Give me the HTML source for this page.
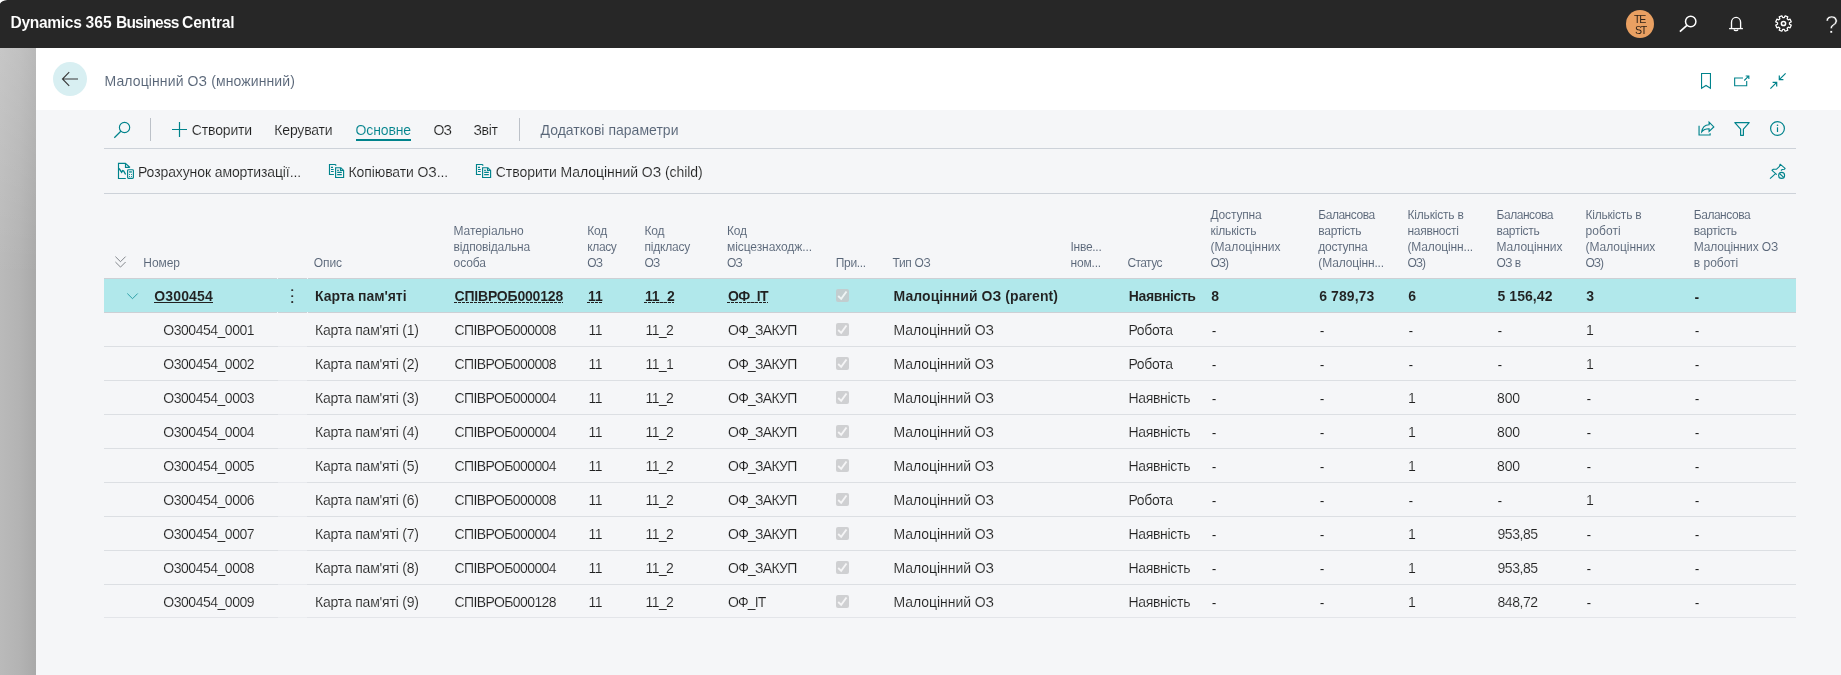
<!DOCTYPE html>
<html lang="uk"><head><meta charset="utf-8"><title>Малоцінний ОЗ (множинний)</title>
<style>
html,body{margin:0;padding:0;}
body{width:1841px;height:675px;position:relative;overflow:hidden;background:#f5f6f8;font-family:"Liberation Sans",sans-serif;color:#212121;}
.t{position:absolute;white-space:nowrap;line-height:20px;font-size:14px;}
.abs{position:absolute;}
#topbar{position:absolute;left:0;top:0;width:1841px;height:48px;background:#272727;}
#strip{position:absolute;left:0;top:48px;width:36px;height:627px;background:linear-gradient(176deg,rgba(255,255,255,.19) 0px,rgba(255,255,255,0) 230px),linear-gradient(90deg,#bababa 0%,#b3b3b3 55%,#a9a9a9 100%);}
#hdr{position:absolute;left:36px;top:48px;width:1805px;height:62px;background:#ffffff;}
#back{position:absolute;left:53px;top:62px;width:34px;height:34px;border-radius:50%;background:#d8eff2;}
.hl{position:absolute;left:104px;width:1692px;height:1px;background:#cdd2d9;}
.vs{position:absolute;width:1px;height:23px;top:118px;background:#bcc1c8;}
.sel{position:absolute;left:104px;width:1692px;height:33px;background:#b1e8eb;border-top:1px solid #cdd0d5;border-bottom:1px solid #cdd0d5;}
.rb{position:absolute;left:104px;width:1692px;height:1px;background:#dcdfe3;}
.cb{position:absolute;}
svg{position:absolute;overflow:visible;}
#ul{position:absolute;left:355.5px;top:139px;width:55.5px;height:2px;background:#00838c;}
#av{position:absolute;left:1625.8px;top:9.8px;width:28.4px;height:28.4px;border-radius:50%;background:#e9a062;}
#txt{position:absolute;left:0;top:0;width:1841px;height:675px;will-change:transform;}

</style></head>
<body>
<div id="topbar"></div>
<svg style="left:0;top:0" width="8" height="5" viewBox="0 0 8 5"><path d="M0 0 H7.2 Q1.6 0.4 0 3.8 Z" fill="#ffffff"/></svg>
<div id="strip"></div>
<div id="hdr"></div>
<div id="back"></div>
<!-- back arrow -->
<svg style="left:61px;top:71px" width="18" height="16" viewBox="0 0 18 16"><path d="M8.2 1.2 L1.5 8 L8.2 14.8 M1.5 8 H17" fill="none" stroke="#3b3b3b" stroke-width="1.15"/></svg>
<!-- avatar -->
<div id="av"></div>
<span class="t" style="left:1634.2px;top:13.2px;font-size:10.6px;line-height:12px;color:#2e2117;letter-spacing:-1.25px;will-change:transform;">TE</span>
<span class="t" style="left:1634.5px;top:24.1px;font-size:10.6px;line-height:12px;color:#2e2117;letter-spacing:-1.25px;will-change:transform;">ST</span>
<!-- top search -->
<svg style="left:1679px;top:16px" width="18" height="17" viewBox="0 0 18 17"><circle cx="11.7" cy="5.5" r="5.2" fill="none" stroke="#fff" stroke-width="1.5"/><path d="M7.9 9.3 L0.9 15.7" stroke="#fff" stroke-width="1.7" fill="none"/></svg>
<!-- bell -->
<svg style="left:1729px;top:16px" width="14" height="16" viewBox="0 0 14 16"><path d="M2.5 12.5 V6.3 A4.55 4.9 0 0 1 11.6 6.3 V12.5" fill="none" stroke="#fff" stroke-width="1.35"/><path d="M0.1 12.6 H13.9" stroke="#fff" stroke-width="1.3"/><path d="M4.9 13.5 A2.2 1.7 0 0 0 9.1 13.5" fill="none" stroke="#fff" stroke-width="1.2"/></svg>
<!-- gear -->
<svg style="left:1775.4px;top:15.4px" width="17" height="17" viewBox="-8.5 -8.5 17 17"><g fill="none" stroke="#fff" stroke-width="1.25" stroke-linejoin="round"><circle r="2.1" stroke-width="1.5"/><path d="M0.80 -5.95 L1.66 -7.72 L4.29 -6.64 L3.64 -4.77 L4.77 -3.64 L6.64 -4.29 L7.72 -1.66 L5.95 -0.80 L5.95 0.80 L7.72 1.66 L6.64 4.29 L4.77 3.64 L3.64 4.77 L4.29 6.64 L1.66 7.72 L0.80 5.95 L-0.80 5.95 L-1.66 7.72 L-4.29 6.64 L-3.64 4.77 L-4.77 3.64 L-6.64 4.29 L-7.72 1.66 L-5.95 0.80 L-5.95 -0.80 L-7.72 -1.66 L-6.64 -4.29 L-4.77 -3.64 L-3.64 -4.77 L-4.29 -6.64 L-1.66 -7.72 L-0.80 -5.95 Z"/></g></svg>
<!-- help -->
<span class="t" style="left:1825.2px;top:10.7px;font-size:23.5px;line-height:28px;color:#fff;-webkit-text-stroke:0.55px #272727;will-change:transform;">?</span>
<!-- header icons -->
<svg style="left:1701px;top:73px" width="11" height="16" viewBox="0 0 11 16"><path d="M0.55 0.55 H9.45 V15.3 L5 12.5 L0.55 15.3 Z" fill="none" stroke="#00838c" stroke-width="1.1"/></svg>
<svg style="left:1733.5px;top:74.5px" width="16" height="12" viewBox="0 0 16 12"><path d="M9 3.05 H0.65 V10.8 H12.7 V6 M10.3 5.5 L14.6 1.2 M11.7 0.95 H14.85 V4.1" fill="none" stroke="#00838c" stroke-width="1.1"/></svg>
<svg style="left:1770px;top:73px" width="16" height="16" viewBox="0 0 16 16"><path d="M15.6 0.4 L9.3 6.7 M9.3 2.6 V6.7 H13.4 M0.4 15.6 L6.7 9.3 M2.6 9.3 H6.7 V13.4" fill="none" stroke="#00838c" stroke-width="1.2"/></svg>
<!-- action bar 1 -->
<svg style="left:114px;top:122px" width="16" height="16" viewBox="0 0 16 16"><circle cx="10.55" cy="5.5" r="5.15" fill="none" stroke="#00838c" stroke-width="1.15"/><path d="M6.8 9.3 L0.3 15.7" stroke="#00838c" stroke-width="1.25"/></svg>
<div class="vs" style="left:150px"></div>
<svg style="left:171.8px;top:121.8px" width="15" height="15" viewBox="0 0 15 15"><path d="M7.5 0 V15 M0 7.5 H15" stroke="#00838c" stroke-width="1.2"/></svg>
<div id="ul"></div>
<div class="vs" style="left:519px"></div>
<div class="hl" style="top:148px"></div>
<div class="hl" style="top:193px"></div>
<!-- right icons -->
<svg style="left:1697.5px;top:120.5px" width="17" height="15" viewBox="0 0 17 15"><path d="M1.05 4.7 V14 H12.1 V12.2 M3.7 10.9 C4.2 7 7 3.9 11.1 3.7 V1.2 L15.8 5.9 L11.1 10.3 V7.8 C7.8 7.7 5.4 8.8 3.7 10.9 Z" fill="none" stroke="#00838c" stroke-width="1.15" stroke-linejoin="miter"/></svg>
<svg style="left:1734px;top:122px" width="16" height="14" viewBox="0 0 16 14"><path d="M0.8 0.7 H15.2 L9.4 7.2 V13.3 H6.6 V7.2 Z" fill="none" stroke="#00838c" stroke-width="1.2" stroke-linejoin="round"/></svg>
<svg style="left:1770px;top:121px" width="15" height="15" viewBox="0 0 15 15"><circle cx="7.5" cy="7.5" r="6.9" fill="none" stroke="#00838c" stroke-width="1.2"/><path d="M7.5 6.3 V11" stroke="#00838c" stroke-width="1.2"/><circle cx="7.5" cy="4.2" r="0.8" fill="#00838c"/></svg>
<!-- pin -->
<svg style="left:1760px;top:158px" width="40" height="28" viewBox="0 0 40 28"><g fill="none" stroke="#00838c" stroke-width="1.1" stroke-linejoin="round" stroke-linecap="butt"><path d="M16.8 16.6 L12 12.3 L13.4 11.2 H16.6 L19.5 8.4 L20.1 6.2 L25.1 10.4 L24.4 11.3 L22.3 11.5 L20.9 12.5"/><path d="M10 20.6 L15.6 15.6"/><circle cx="21.6" cy="17.4" r="3"/><path d="M19.5 15.5 L23.7 19.3"/></g></svg>
<!-- action bar 2 icons -->
<svg style="left:110px;top:158px" width="30" height="26" viewBox="0 0 30 26"><g fill="none" stroke="#00838c" stroke-width="1.15"><path d="M15.8 20.5 H8.5 V5.4 H15.4 L20 9.5 M15.5 5.6 V9.3 H19.8"/><path d="M9 10.4 L11.6 14.2 L12.7 12.6 L13.7 13 L15.6 16.5" stroke-width="1.35"/><rect x="17.6" y="11.7" width="5.8" height="8.6" rx="0.9"/></g><rect x="19.1" y="13.3" width="2.8" height="1.3" fill="#00838c"/><g fill="#00838c"><circle cx="19.5" cy="16.5" r="0.55"/><circle cx="21.5" cy="16.5" r="0.55"/><circle cx="19.5" cy="18.5" r="0.55"/><circle cx="21.5" cy="18.5" r="0.55"/></g></svg>
<svg style="left:322px;top:158px" width="30" height="26" viewBox="0 0 30 26"><g fill="none" stroke="#00838c" stroke-width="1.15"><path d="M11.9 16.5 H7.5 V6.5 H13.2 L14.3 7.5"/><path d="M9 9.4 H11 M9 11.5 H11.7 M9 13.5 H11.7"/><path d="M13.6 9.7 H18.9 L21.6 12.4 V19.5 H13.6 Z"/><path d="M18.5 9.9 V12.4 H21.4"/><path d="M15.2 12.4 H16.8 M15.2 14.4 H19.8 M15.2 16.6 H19.8"/></g></svg>
<svg style="left:469.3px;top:158px" width="30" height="26" viewBox="0 0 30 26"><g fill="none" stroke="#00838c" stroke-width="1.15"><path d="M11.9 16.5 H7.5 V6.5 H13.2 L14.3 7.5"/><path d="M9 9.4 H11 M9 11.5 H11.7 M9 13.5 H11.7"/><path d="M13.6 9.7 H18.9 L21.6 12.4 V19.5 H13.6 Z"/><path d="M18.5 9.9 V12.4 H21.4"/><path d="M15.2 12.4 H16.8 M15.2 14.4 H19.8 M15.2 16.6 H19.8"/></g></svg>
<!-- table header chevron -->
<svg style="left:115px;top:256px" width="11" height="12" viewBox="0 0 11 12"><path d="M0.4 0.6 L5.5 5.7 L10.6 0.6 M0.4 6 L5.5 11.1 L10.6 6" fill="none" stroke="#6e7379" stroke-width="0.85"/></svg>
<!-- row chevron -->
<svg style="left:127px;top:292.5px;z-index:3" width="11" height="7" viewBox="0 0 11 7"><path d="M0.3 0.5 L5.5 5.7 L10.7 0.5" fill="none" stroke="#1f979f" stroke-width="0.9"/></svg>
<!-- kebab -->
<svg style="left:291.3px;top:288.9px;z-index:3" width="3" height="15" viewBox="0 0 3 15"><rect x="0.25" y="0.15" width="1.95" height="1.95" rx="0.6" fill="#303030"/><rect x="0.25" y="6.15" width="1.95" height="1.95" rx="0.6" fill="#303030"/><rect x="0.25" y="12.05" width="1.95" height="1.95" rx="0.6" fill="#303030"/></svg>

<div class="sel" style="top:278px"></div>
<div class="rb" style="top:346px"></div>
<div class="abs" style="left:278px;top:346px;width:29px;height:1px;background:rgba(245,246,248,.45)"></div>
<div class="rb" style="top:380px"></div>
<div class="abs" style="left:278px;top:380px;width:29px;height:1px;background:rgba(245,246,248,.45)"></div>
<div class="rb" style="top:414px"></div>
<div class="abs" style="left:278px;top:414px;width:29px;height:1px;background:rgba(245,246,248,.45)"></div>
<div class="rb" style="top:448px"></div>
<div class="abs" style="left:278px;top:448px;width:29px;height:1px;background:rgba(245,246,248,.45)"></div>
<div class="rb" style="top:482px"></div>
<div class="abs" style="left:278px;top:482px;width:29px;height:1px;background:rgba(245,246,248,.45)"></div>
<div class="rb" style="top:516px"></div>
<div class="abs" style="left:278px;top:516px;width:29px;height:1px;background:rgba(245,246,248,.45)"></div>
<div class="rb" style="top:550px"></div>
<div class="abs" style="left:278px;top:550px;width:29px;height:1px;background:rgba(245,246,248,.45)"></div>
<div class="rb" style="top:584px"></div>
<div class="abs" style="left:278px;top:584px;width:29px;height:1px;background:rgba(245,246,248,.45)"></div>
<div class="rb" style="top:617px;background:#e3e5e9"></div>
<div class="abs" style="left:278px;top:617px;width:29px;height:1px;background:rgba(245,246,248,.45)"></div>
<div class="abs" style="left:277px;top:278px;width:1px;height:1px;background:#f5f6f8"></div>
<div class="abs" style="left:277px;top:312px;width:1px;height:1px;background:#f5f6f8"></div>
<div class="abs" style="left:307px;top:278px;width:1px;height:1px;background:#f5f6f8"></div>
<div class="abs" style="left:307px;top:312px;width:1px;height:1px;background:#f5f6f8"></div>
<div class="abs" style="left:154.3px;top:302px;width:58.5px;height:1px;background:#212121"></div>
<div class="abs" style="left:454px;top:302px;width:109px;height:1px;background:repeating-linear-gradient(90deg,#212121 0 3px,rgba(0,0,0,0) 3px 4px)"></div>
<div class="abs" style="left:587.1px;top:302px;width:15.8px;height:1px;background:repeating-linear-gradient(90deg,#212121 0 3px,rgba(0,0,0,0) 3px 4px)"></div>
<div class="abs" style="left:644.2px;top:302px;width:30px;height:1px;background:repeating-linear-gradient(90deg,#212121 0 3px,rgba(0,0,0,0) 3px 4px)"></div>
<div class="abs" style="left:727.2px;top:302px;width:41px;height:1px;background:repeating-linear-gradient(90deg,#212121 0 3px,rgba(0,0,0,0) 3px 4px)"></div>
<svg class="cb" style="left:836.3px;top:289.3px" width="13" height="13" viewBox="0 0 13 13"><rect width="13" height="13" rx="2" fill="#c2cdcf"/><path d="M2.2 7 L5.2 9.9 L10.5 2.5" fill="none" stroke="#eef4f4" stroke-width="1.9"/></svg>
<svg class="cb" style="left:836.3px;top:323.3px" width="13" height="13" viewBox="0 0 13 13"><rect width="13" height="13" rx="2" fill="#cfd0d2"/><path d="M2.2 7 L5.2 9.9 L10.5 2.5" fill="none" stroke="#f5f5f6" stroke-width="1.9"/></svg>
<svg class="cb" style="left:836.3px;top:357.3px" width="13" height="13" viewBox="0 0 13 13"><rect width="13" height="13" rx="2" fill="#cfd0d2"/><path d="M2.2 7 L5.2 9.9 L10.5 2.5" fill="none" stroke="#f5f5f6" stroke-width="1.9"/></svg>
<svg class="cb" style="left:836.3px;top:391.3px" width="13" height="13" viewBox="0 0 13 13"><rect width="13" height="13" rx="2" fill="#cfd0d2"/><path d="M2.2 7 L5.2 9.9 L10.5 2.5" fill="none" stroke="#f5f5f6" stroke-width="1.9"/></svg>
<svg class="cb" style="left:836.3px;top:425.3px" width="13" height="13" viewBox="0 0 13 13"><rect width="13" height="13" rx="2" fill="#cfd0d2"/><path d="M2.2 7 L5.2 9.9 L10.5 2.5" fill="none" stroke="#f5f5f6" stroke-width="1.9"/></svg>
<svg class="cb" style="left:836.3px;top:459.3px" width="13" height="13" viewBox="0 0 13 13"><rect width="13" height="13" rx="2" fill="#cfd0d2"/><path d="M2.2 7 L5.2 9.9 L10.5 2.5" fill="none" stroke="#f5f5f6" stroke-width="1.9"/></svg>
<svg class="cb" style="left:836.3px;top:493.3px" width="13" height="13" viewBox="0 0 13 13"><rect width="13" height="13" rx="2" fill="#cfd0d2"/><path d="M2.2 7 L5.2 9.9 L10.5 2.5" fill="none" stroke="#f5f5f6" stroke-width="1.9"/></svg>
<svg class="cb" style="left:836.3px;top:527.3px" width="13" height="13" viewBox="0 0 13 13"><rect width="13" height="13" rx="2" fill="#cfd0d2"/><path d="M2.2 7 L5.2 9.9 L10.5 2.5" fill="none" stroke="#f5f5f6" stroke-width="1.9"/></svg>
<svg class="cb" style="left:836.3px;top:561.3px" width="13" height="13" viewBox="0 0 13 13"><rect width="13" height="13" rx="2" fill="#cfd0d2"/><path d="M2.2 7 L5.2 9.9 L10.5 2.5" fill="none" stroke="#f5f5f6" stroke-width="1.9"/></svg>
<svg class="cb" style="left:836.3px;top:595.3px" width="13" height="13" viewBox="0 0 13 13"><rect width="13" height="13" rx="2" fill="#cfd0d2"/><path d="M2.2 7 L5.2 9.9 L10.5 2.5" fill="none" stroke="#f5f5f6" stroke-width="1.9"/></svg>
<div id="txt">
<span class="t" id="t0" style="left:10.60px;top:13.39px;font-size:15.6px;font-weight:700;color:#ffffff;-webkit-text-stroke:0.08px #272727;letter-spacing:-0.346px;white-space:pre;">Dynamics </span>
<span class="t" id="t1" style="left:85.50px;top:13.39px;font-size:15.6px;font-weight:700;color:#ffffff;-webkit-text-stroke:0.08px #272727;letter-spacing:0.035px;white-space:pre;">365 </span>
<span class="t" id="t2" style="left:116.00px;top:13.39px;font-size:15.6px;font-weight:700;color:#ffffff;-webkit-text-stroke:0.08px #272727;letter-spacing:-0.841px;white-space:pre;">Business </span>
<span class="t" id="t3" style="left:182.10px;top:13.39px;font-size:15.6px;font-weight:700;color:#ffffff;-webkit-text-stroke:0.08px #272727;letter-spacing:-0.205px;white-space:pre;">Central</span>
<span class="t" id="t4" style="left:104.50px;top:71.35px;font-size:14px;color:#586577;-webkit-text-stroke:0.05px #ffffff;letter-spacing:0.113px;">Малоцінний ОЗ (множинний)</span>
<span class="t" id="t5" style="left:191.80px;top:120.15px;font-size:14px;-webkit-text-stroke:0.14px #f5f6f8;letter-spacing:-0.155px;">Створити</span>
<span class="t" id="t6" style="left:274.30px;top:120.15px;font-size:14px;-webkit-text-stroke:0.14px #f5f6f8;letter-spacing:-0.170px;">Керувати</span>
<span class="t" id="t7" style="left:355.50px;top:120.15px;font-size:14px;color:#00838c;-webkit-text-stroke:0.1px #f5f6f8;letter-spacing:-0.125px;">Основне</span>
<span class="t" id="t8" style="left:433.50px;top:120.15px;font-size:14px;-webkit-text-stroke:0.14px #f5f6f8;letter-spacing:-0.930px;">ОЗ</span>
<span class="t" id="t9" style="left:473.50px;top:120.15px;font-size:14px;-webkit-text-stroke:0.14px #f5f6f8;letter-spacing:-0.355px;">Звіт</span>
<span class="t" id="t10" style="left:540.50px;top:120.15px;font-size:14px;color:#586577;-webkit-text-stroke:0.05px #f5f6f8;letter-spacing:0.021px;">Додаткові параметри</span>
<span class="t" id="t11" style="left:138.00px;top:161.95px;font-size:14px;-webkit-text-stroke:0.14px #f5f6f8;letter-spacing:-0.107px;">Розрахунок амортизації...</span>
<span class="t" id="t12" style="left:348.50px;top:161.95px;font-size:14px;-webkit-text-stroke:0.14px #f5f6f8;letter-spacing:-0.095px;">Копіювати ОЗ...</span>
<span class="t" id="t13" style="left:495.80px;top:161.95px;font-size:14px;-webkit-text-stroke:0.14px #f5f6f8;letter-spacing:-0.057px;">Створити Малоцінний ОЗ (child)</span>
<span class="t" id="t14" style="left:143.30px;top:252.84px;font-size:12px;color:#586577;-webkit-text-stroke:0.05px #f5f6f8;letter-spacing:-0.047px;">Номер</span>
<span class="t" id="t15" style="left:313.80px;top:252.84px;font-size:12px;color:#586577;-webkit-text-stroke:0.05px #f5f6f8;letter-spacing:-0.087px;">Опис</span>
<span class="t" id="t16" style="left:453.60px;top:220.84px;font-size:12px;color:#586577;-webkit-text-stroke:0.05px #f5f6f8;letter-spacing:-0.105px;">Матеріально</span>
<span class="t" id="t17" style="left:453.60px;top:236.84px;font-size:12px;color:#586577;-webkit-text-stroke:0.05px #f5f6f8;letter-spacing:-0.154px;">відповідальна</span>
<span class="t" id="t18" style="left:453.60px;top:252.84px;font-size:12px;color:#586577;-webkit-text-stroke:0.05px #f5f6f8;letter-spacing:-0.113px;">особа</span>
<span class="t" id="t19" style="left:587.30px;top:220.84px;font-size:12px;color:#586577;-webkit-text-stroke:0.05px #f5f6f8;letter-spacing:-0.235px;">Код</span>
<span class="t" id="t20" style="left:587.30px;top:236.84px;font-size:12px;color:#586577;-webkit-text-stroke:0.05px #f5f6f8;letter-spacing:-0.373px;">класу</span>
<span class="t" id="t21" style="left:587.30px;top:252.84px;font-size:12px;color:#586577;-webkit-text-stroke:0.05px #f5f6f8;letter-spacing:-0.897px;">ОЗ</span>
<span class="t" id="t22" style="left:644.50px;top:220.84px;font-size:12px;color:#586577;-webkit-text-stroke:0.05px #f5f6f8;letter-spacing:-0.235px;">Код</span>
<span class="t" id="t23" style="left:644.50px;top:236.84px;font-size:12px;color:#586577;-webkit-text-stroke:0.05px #f5f6f8;letter-spacing:-0.217px;">підкласу</span>
<span class="t" id="t24" style="left:644.50px;top:252.84px;font-size:12px;color:#586577;-webkit-text-stroke:0.05px #f5f6f8;letter-spacing:-0.897px;">ОЗ</span>
<span class="t" id="t25" style="left:727.00px;top:220.84px;font-size:12px;color:#586577;-webkit-text-stroke:0.05px #f5f6f8;letter-spacing:-0.235px;">Код</span>
<span class="t" id="t26" style="left:727.00px;top:236.84px;font-size:12px;color:#586577;-webkit-text-stroke:0.05px #f5f6f8;letter-spacing:-0.079px;">місцезнаходж...</span>
<span class="t" id="t27" style="left:727.00px;top:252.84px;font-size:12px;color:#586577;-webkit-text-stroke:0.05px #f5f6f8;letter-spacing:-0.897px;">ОЗ</span>
<span class="t" id="t28" style="left:835.80px;top:252.84px;font-size:12px;color:#586577;-webkit-text-stroke:0.05px #f5f6f8;letter-spacing:-0.336px;">При...</span>
<span class="t" id="t29" style="left:892.50px;top:252.84px;font-size:12px;color:#586577;-webkit-text-stroke:0.05px #f5f6f8;letter-spacing:-0.320px;">Тип ОЗ</span>
<span class="t" id="t30" style="left:1070.50px;top:236.84px;font-size:12px;color:#586577;-webkit-text-stroke:0.05px #f5f6f8;letter-spacing:-0.270px;">Інве...</span>
<span class="t" id="t31" style="left:1070.50px;top:252.84px;font-size:12px;color:#586577;-webkit-text-stroke:0.05px #f5f6f8;letter-spacing:-0.177px;">ном...</span>
<span class="t" id="t32" style="left:1127.50px;top:252.84px;font-size:12px;color:#586577;-webkit-text-stroke:0.05px #f5f6f8;letter-spacing:-0.606px;">Статус</span>
<span class="t" id="t33" style="left:1210.50px;top:204.84px;font-size:12px;color:#586577;-webkit-text-stroke:0.05px #f5f6f8;letter-spacing:-0.172px;">Доступна</span>
<span class="t" id="t34" style="left:1210.50px;top:220.84px;font-size:12px;color:#586577;-webkit-text-stroke:0.05px #f5f6f8;letter-spacing:-0.116px;">кількість</span>
<span class="t" id="t35" style="left:1210.50px;top:236.84px;font-size:12px;color:#586577;-webkit-text-stroke:0.05px #f5f6f8;letter-spacing:-0.010px;">(Малоцінних</span>
<span class="t" id="t36" style="left:1210.50px;top:252.84px;font-size:12px;color:#586577;-webkit-text-stroke:0.05px #f5f6f8;letter-spacing:-0.993px;">ОЗ)</span>
<span class="t" id="t37" style="left:1318.30px;top:204.84px;font-size:12px;color:#586577;-webkit-text-stroke:0.05px #f5f6f8;letter-spacing:-0.475px;">Балансова</span>
<span class="t" id="t38" style="left:1318.30px;top:220.84px;font-size:12px;color:#586577;-webkit-text-stroke:0.05px #f5f6f8;letter-spacing:-0.292px;">вартість</span>
<span class="t" id="t39" style="left:1318.30px;top:236.84px;font-size:12px;color:#586577;-webkit-text-stroke:0.05px #f5f6f8;letter-spacing:-0.264px;">доступна</span>
<span class="t" id="t40" style="left:1318.30px;top:252.84px;font-size:12px;color:#586577;-webkit-text-stroke:0.05px #f5f6f8;letter-spacing:-0.142px;">(Малоцінн...</span>
<span class="t" id="t41" style="left:1407.50px;top:204.84px;font-size:12px;color:#586577;-webkit-text-stroke:0.05px #f5f6f8;letter-spacing:-0.182px;">Кількість в</span>
<span class="t" id="t42" style="left:1407.50px;top:220.84px;font-size:12px;color:#586577;-webkit-text-stroke:0.05px #f5f6f8;letter-spacing:-0.293px;">наявності</span>
<span class="t" id="t43" style="left:1407.50px;top:236.84px;font-size:12px;color:#586577;-webkit-text-stroke:0.05px #f5f6f8;letter-spacing:-0.159px;">(Малоцінн...</span>
<span class="t" id="t44" style="left:1407.50px;top:252.84px;font-size:12px;color:#586577;-webkit-text-stroke:0.05px #f5f6f8;letter-spacing:-0.993px;">ОЗ)</span>
<span class="t" id="t45" style="left:1496.50px;top:204.84px;font-size:12px;color:#586577;-webkit-text-stroke:0.05px #f5f6f8;letter-spacing:-0.453px;">Балансова</span>
<span class="t" id="t46" style="left:1496.50px;top:220.84px;font-size:12px;color:#586577;-webkit-text-stroke:0.05px #f5f6f8;letter-spacing:-0.292px;">вартість</span>
<span class="t" id="t47" style="left:1496.50px;top:236.84px;font-size:12px;color:#586577;-webkit-text-stroke:0.05px #f5f6f8;letter-spacing:-0.013px;">Малоцінних</span>
<span class="t" id="t48" style="left:1496.50px;top:252.84px;font-size:12px;color:#586577;-webkit-text-stroke:0.05px #f5f6f8;letter-spacing:-0.524px;">ОЗ в</span>
<span class="t" id="t49" style="left:1585.50px;top:204.84px;font-size:12px;color:#586577;-webkit-text-stroke:0.05px #f5f6f8;letter-spacing:-0.209px;">Кількість в</span>
<span class="t" id="t50" style="left:1585.50px;top:220.84px;font-size:12px;color:#586577;-webkit-text-stroke:0.05px #f5f6f8;letter-spacing:0.067px;">роботі</span>
<span class="t" id="t51" style="left:1585.50px;top:236.84px;font-size:12px;color:#586577;-webkit-text-stroke:0.05px #f5f6f8;letter-spacing:-0.028px;">(Малоцінних</span>
<span class="t" id="t52" style="left:1585.50px;top:252.84px;font-size:12px;color:#586577;-webkit-text-stroke:0.05px #f5f6f8;letter-spacing:-0.993px;">ОЗ)</span>
<span class="t" id="t53" style="left:1693.80px;top:204.84px;font-size:12px;color:#586577;-webkit-text-stroke:0.05px #f5f6f8;letter-spacing:-0.475px;">Балансова</span>
<span class="t" id="t54" style="left:1693.80px;top:220.84px;font-size:12px;color:#586577;-webkit-text-stroke:0.05px #f5f6f8;letter-spacing:-0.292px;">вартість</span>
<span class="t" id="t55" style="left:1693.80px;top:236.84px;font-size:12px;color:#586577;-webkit-text-stroke:0.05px #f5f6f8;letter-spacing:-0.141px;">Малоцінних ОЗ</span>
<span class="t" id="t56" style="left:1693.80px;top:252.84px;font-size:12px;color:#586577;-webkit-text-stroke:0.05px #f5f6f8;letter-spacing:-0.002px;">в роботі</span>
<span class="t" id="t57" style="left:154.30px;top:286.35px;font-size:14px;font-weight:700;-webkit-text-stroke:0.06px #b0e8ea;letter-spacing:0.127px;">О300454</span>
<span class="t" id="t58" style="left:315.00px;top:286.35px;font-size:14px;font-weight:700;-webkit-text-stroke:0.06px #b0e8ea;letter-spacing:-0.058px;">Карта пам'яті</span>
<span class="t" id="t59" style="left:454.50px;top:286.35px;font-size:14px;font-weight:700;-webkit-text-stroke:0.06px #b0e8ea;letter-spacing:-0.192px;">СПІВРОБ000128</span>
<span class="t" id="t60" style="left:588.00px;top:286.35px;font-size:14px;font-weight:700;-webkit-text-stroke:0.06px #b0e8ea;letter-spacing:0.094px;">11</span>
<span class="t" id="t61" style="left:645.00px;top:286.35px;font-size:14px;font-weight:700;-webkit-text-stroke:0.06px #b0e8ea;letter-spacing:-0.219px;">11_2</span>
<span class="t" id="t62" style="left:728.00px;top:286.35px;font-size:14px;font-weight:700;-webkit-text-stroke:0.06px #b0e8ea;letter-spacing:-0.616px;">ОФ_IT</span>
<span class="t" id="t63" style="left:893.50px;top:286.35px;font-size:14px;font-weight:700;-webkit-text-stroke:0.06px #b0e8ea;letter-spacing:0.065px;">Малоцінний ОЗ (parent)</span>
<span class="t" id="t64" style="left:1128.80px;top:286.35px;font-size:14px;font-weight:700;-webkit-text-stroke:0.06px #b0e8ea;letter-spacing:-0.387px;">Наявність</span>
<span class="t" id="t65" style="left:1211.30px;top:286.35px;font-size:14px;font-weight:700;-webkit-text-stroke:0.06px #b0e8ea;letter-spacing:-0.297px;">8</span>
<span class="t" id="t66" style="left:1319.30px;top:286.35px;font-size:14px;font-weight:700;-webkit-text-stroke:0.06px #b0e8ea;letter-spacing:0.062px;">6 789,73</span>
<span class="t" id="t67" style="left:1408.30px;top:286.35px;font-size:14px;font-weight:700;-webkit-text-stroke:0.06px #b0e8ea;letter-spacing:-0.497px;">6</span>
<span class="t" id="t68" style="left:1497.50px;top:286.35px;font-size:14px;font-weight:700;-webkit-text-stroke:0.06px #b0e8ea;letter-spacing:0.062px;">5 156,42</span>
<span class="t" id="t69" style="left:1586.30px;top:286.35px;font-size:14px;font-weight:700;-webkit-text-stroke:0.06px #b0e8ea;letter-spacing:-0.997px;">3</span>
<span class="t" id="t70" style="left:1694.50px;top:286.95px;font-size:14px;font-weight:700;-webkit-text-stroke:0.06px #b0e8ea;">-</span>
<span class="t" id="t71" style="left:163.30px;top:320.35px;font-size:14px;-webkit-text-stroke:0.14px #f5f6f8;letter-spacing:-0.479px;">О300454_0001</span>
<span class="t" id="t72" style="left:315.00px;top:320.35px;font-size:14px;-webkit-text-stroke:0.14px #f5f6f8;letter-spacing:-0.196px;">Карта пам'яті (1)</span>
<span class="t" id="t73" style="left:454.50px;top:320.35px;font-size:14px;-webkit-text-stroke:0.14px #f5f6f8;letter-spacing:-0.595px;">СПІВРОБ000008</span>
<span class="t" id="t74" style="left:588.50px;top:320.35px;font-size:14px;-webkit-text-stroke:0.14px #f5f6f8;letter-spacing:-0.523px;">11</span>
<span class="t" id="t75" style="left:645.50px;top:320.35px;font-size:14px;-webkit-text-stroke:0.14px #f5f6f8;letter-spacing:-0.577px;">11_2</span>
<span class="t" id="t76" style="left:728.00px;top:320.35px;font-size:14px;-webkit-text-stroke:0.14px #f5f6f8;letter-spacing:-0.736px;">ОФ_ЗАКУП</span>
<span class="t" id="t77" style="left:893.50px;top:320.35px;font-size:14px;-webkit-text-stroke:0.14px #f5f6f8;letter-spacing:-0.053px;">Малоцінний ОЗ</span>
<span class="t" id="t78" style="left:1128.40px;top:320.35px;font-size:14px;-webkit-text-stroke:0.14px #f5f6f8;letter-spacing:-0.291px;">Робота</span>
<span class="t" id="t79" style="left:1211.80px;top:321.25px;font-size:14px;-webkit-text-stroke:0.14px #f5f6f8;">-</span>
<span class="t" id="t80" style="left:1319.80px;top:321.25px;font-size:14px;-webkit-text-stroke:0.14px #f5f6f8;">-</span>
<span class="t" id="t81" style="left:1408.50px;top:321.25px;font-size:14px;-webkit-text-stroke:0.14px #f5f6f8;">-</span>
<span class="t" id="t82" style="left:1497.50px;top:321.25px;font-size:14px;-webkit-text-stroke:0.14px #f5f6f8;">-</span>
<span class="t" id="t83" style="left:1585.90px;top:320.35px;font-size:14px;-webkit-text-stroke:0.14px #f5f6f8;">1</span>
<span class="t" id="t84" style="left:1694.80px;top:321.25px;font-size:14px;-webkit-text-stroke:0.14px #f5f6f8;">-</span>
<span class="t" id="t85" style="left:163.30px;top:354.35px;font-size:14px;-webkit-text-stroke:0.14px #f5f6f8;letter-spacing:-0.479px;">О300454_0002</span>
<span class="t" id="t86" style="left:315.00px;top:354.35px;font-size:14px;-webkit-text-stroke:0.14px #f5f6f8;letter-spacing:-0.196px;">Карта пам'яті (2)</span>
<span class="t" id="t87" style="left:454.50px;top:354.35px;font-size:14px;-webkit-text-stroke:0.14px #f5f6f8;letter-spacing:-0.595px;">СПІВРОБ000008</span>
<span class="t" id="t88" style="left:588.50px;top:354.35px;font-size:14px;-webkit-text-stroke:0.14px #f5f6f8;letter-spacing:-0.523px;">11</span>
<span class="t" id="t89" style="left:645.50px;top:354.35px;font-size:14px;-webkit-text-stroke:0.14px #f5f6f8;letter-spacing:-0.577px;">11_1</span>
<span class="t" id="t90" style="left:728.00px;top:354.35px;font-size:14px;-webkit-text-stroke:0.14px #f5f6f8;letter-spacing:-0.736px;">ОФ_ЗАКУП</span>
<span class="t" id="t91" style="left:893.50px;top:354.35px;font-size:14px;-webkit-text-stroke:0.14px #f5f6f8;letter-spacing:-0.053px;">Малоцінний ОЗ</span>
<span class="t" id="t92" style="left:1128.40px;top:354.35px;font-size:14px;-webkit-text-stroke:0.14px #f5f6f8;letter-spacing:-0.291px;">Робота</span>
<span class="t" id="t93" style="left:1211.80px;top:355.25px;font-size:14px;-webkit-text-stroke:0.14px #f5f6f8;">-</span>
<span class="t" id="t94" style="left:1319.80px;top:355.25px;font-size:14px;-webkit-text-stroke:0.14px #f5f6f8;">-</span>
<span class="t" id="t95" style="left:1408.50px;top:355.25px;font-size:14px;-webkit-text-stroke:0.14px #f5f6f8;">-</span>
<span class="t" id="t96" style="left:1497.50px;top:355.25px;font-size:14px;-webkit-text-stroke:0.14px #f5f6f8;">-</span>
<span class="t" id="t97" style="left:1585.90px;top:354.35px;font-size:14px;-webkit-text-stroke:0.14px #f5f6f8;">1</span>
<span class="t" id="t98" style="left:1694.80px;top:355.25px;font-size:14px;-webkit-text-stroke:0.14px #f5f6f8;">-</span>
<span class="t" id="t99" style="left:163.30px;top:388.35px;font-size:14px;-webkit-text-stroke:0.14px #f5f6f8;letter-spacing:-0.479px;">О300454_0003</span>
<span class="t" id="t100" style="left:315.00px;top:388.35px;font-size:14px;-webkit-text-stroke:0.14px #f5f6f8;letter-spacing:-0.196px;">Карта пам'яті (3)</span>
<span class="t" id="t101" style="left:454.50px;top:388.35px;font-size:14px;-webkit-text-stroke:0.14px #f5f6f8;letter-spacing:-0.595px;">СПІВРОБ000004</span>
<span class="t" id="t102" style="left:588.50px;top:388.35px;font-size:14px;-webkit-text-stroke:0.14px #f5f6f8;letter-spacing:-0.523px;">11</span>
<span class="t" id="t103" style="left:645.50px;top:388.35px;font-size:14px;-webkit-text-stroke:0.14px #f5f6f8;letter-spacing:-0.577px;">11_2</span>
<span class="t" id="t104" style="left:728.00px;top:388.35px;font-size:14px;-webkit-text-stroke:0.14px #f5f6f8;letter-spacing:-0.736px;">ОФ_ЗАКУП</span>
<span class="t" id="t105" style="left:893.50px;top:388.35px;font-size:14px;-webkit-text-stroke:0.14px #f5f6f8;letter-spacing:-0.053px;">Малоцінний ОЗ</span>
<span class="t" id="t106" style="left:1128.40px;top:388.35px;font-size:14px;-webkit-text-stroke:0.14px #f5f6f8;letter-spacing:-0.297px;">Наявність</span>
<span class="t" id="t107" style="left:1211.80px;top:389.25px;font-size:14px;-webkit-text-stroke:0.14px #f5f6f8;">-</span>
<span class="t" id="t108" style="left:1319.80px;top:389.25px;font-size:14px;-webkit-text-stroke:0.14px #f5f6f8;">-</span>
<span class="t" id="t109" style="left:1407.90px;top:388.35px;font-size:14px;-webkit-text-stroke:0.14px #f5f6f8;">1</span>
<span class="t" id="t110" style="left:1497.10px;top:388.35px;font-size:14px;-webkit-text-stroke:0.14px #f5f6f8;letter-spacing:-0.220px;">800</span>
<span class="t" id="t111" style="left:1586.50px;top:389.25px;font-size:14px;-webkit-text-stroke:0.14px #f5f6f8;">-</span>
<span class="t" id="t112" style="left:1694.80px;top:389.25px;font-size:14px;-webkit-text-stroke:0.14px #f5f6f8;">-</span>
<span class="t" id="t113" style="left:163.30px;top:422.35px;font-size:14px;-webkit-text-stroke:0.14px #f5f6f8;letter-spacing:-0.479px;">О300454_0004</span>
<span class="t" id="t114" style="left:315.00px;top:422.35px;font-size:14px;-webkit-text-stroke:0.14px #f5f6f8;letter-spacing:-0.196px;">Карта пам'яті (4)</span>
<span class="t" id="t115" style="left:454.50px;top:422.35px;font-size:14px;-webkit-text-stroke:0.14px #f5f6f8;letter-spacing:-0.595px;">СПІВРОБ000004</span>
<span class="t" id="t116" style="left:588.50px;top:422.35px;font-size:14px;-webkit-text-stroke:0.14px #f5f6f8;letter-spacing:-0.523px;">11</span>
<span class="t" id="t117" style="left:645.50px;top:422.35px;font-size:14px;-webkit-text-stroke:0.14px #f5f6f8;letter-spacing:-0.577px;">11_2</span>
<span class="t" id="t118" style="left:728.00px;top:422.35px;font-size:14px;-webkit-text-stroke:0.14px #f5f6f8;letter-spacing:-0.736px;">ОФ_ЗАКУП</span>
<span class="t" id="t119" style="left:893.50px;top:422.35px;font-size:14px;-webkit-text-stroke:0.14px #f5f6f8;letter-spacing:-0.053px;">Малоцінний ОЗ</span>
<span class="t" id="t120" style="left:1128.40px;top:422.35px;font-size:14px;-webkit-text-stroke:0.14px #f5f6f8;letter-spacing:-0.297px;">Наявність</span>
<span class="t" id="t121" style="left:1211.80px;top:423.25px;font-size:14px;-webkit-text-stroke:0.14px #f5f6f8;">-</span>
<span class="t" id="t122" style="left:1319.80px;top:423.25px;font-size:14px;-webkit-text-stroke:0.14px #f5f6f8;">-</span>
<span class="t" id="t123" style="left:1407.90px;top:422.35px;font-size:14px;-webkit-text-stroke:0.14px #f5f6f8;">1</span>
<span class="t" id="t124" style="left:1497.10px;top:422.35px;font-size:14px;-webkit-text-stroke:0.14px #f5f6f8;letter-spacing:-0.220px;">800</span>
<span class="t" id="t125" style="left:1586.50px;top:423.25px;font-size:14px;-webkit-text-stroke:0.14px #f5f6f8;">-</span>
<span class="t" id="t126" style="left:1694.80px;top:423.25px;font-size:14px;-webkit-text-stroke:0.14px #f5f6f8;">-</span>
<span class="t" id="t127" style="left:163.30px;top:456.35px;font-size:14px;-webkit-text-stroke:0.14px #f5f6f8;letter-spacing:-0.479px;">О300454_0005</span>
<span class="t" id="t128" style="left:315.00px;top:456.35px;font-size:14px;-webkit-text-stroke:0.14px #f5f6f8;letter-spacing:-0.196px;">Карта пам'яті (5)</span>
<span class="t" id="t129" style="left:454.50px;top:456.35px;font-size:14px;-webkit-text-stroke:0.14px #f5f6f8;letter-spacing:-0.595px;">СПІВРОБ000004</span>
<span class="t" id="t130" style="left:588.50px;top:456.35px;font-size:14px;-webkit-text-stroke:0.14px #f5f6f8;letter-spacing:-0.523px;">11</span>
<span class="t" id="t131" style="left:645.50px;top:456.35px;font-size:14px;-webkit-text-stroke:0.14px #f5f6f8;letter-spacing:-0.577px;">11_2</span>
<span class="t" id="t132" style="left:728.00px;top:456.35px;font-size:14px;-webkit-text-stroke:0.14px #f5f6f8;letter-spacing:-0.736px;">ОФ_ЗАКУП</span>
<span class="t" id="t133" style="left:893.50px;top:456.35px;font-size:14px;-webkit-text-stroke:0.14px #f5f6f8;letter-spacing:-0.053px;">Малоцінний ОЗ</span>
<span class="t" id="t134" style="left:1128.40px;top:456.35px;font-size:14px;-webkit-text-stroke:0.14px #f5f6f8;letter-spacing:-0.297px;">Наявність</span>
<span class="t" id="t135" style="left:1211.80px;top:457.25px;font-size:14px;-webkit-text-stroke:0.14px #f5f6f8;">-</span>
<span class="t" id="t136" style="left:1319.80px;top:457.25px;font-size:14px;-webkit-text-stroke:0.14px #f5f6f8;">-</span>
<span class="t" id="t137" style="left:1407.90px;top:456.35px;font-size:14px;-webkit-text-stroke:0.14px #f5f6f8;">1</span>
<span class="t" id="t138" style="left:1497.10px;top:456.35px;font-size:14px;-webkit-text-stroke:0.14px #f5f6f8;letter-spacing:-0.220px;">800</span>
<span class="t" id="t139" style="left:1586.50px;top:457.25px;font-size:14px;-webkit-text-stroke:0.14px #f5f6f8;">-</span>
<span class="t" id="t140" style="left:1694.80px;top:457.25px;font-size:14px;-webkit-text-stroke:0.14px #f5f6f8;">-</span>
<span class="t" id="t141" style="left:163.30px;top:490.35px;font-size:14px;-webkit-text-stroke:0.14px #f5f6f8;letter-spacing:-0.479px;">О300454_0006</span>
<span class="t" id="t142" style="left:315.00px;top:490.35px;font-size:14px;-webkit-text-stroke:0.14px #f5f6f8;letter-spacing:-0.196px;">Карта пам'яті (6)</span>
<span class="t" id="t143" style="left:454.50px;top:490.35px;font-size:14px;-webkit-text-stroke:0.14px #f5f6f8;letter-spacing:-0.595px;">СПІВРОБ000008</span>
<span class="t" id="t144" style="left:588.50px;top:490.35px;font-size:14px;-webkit-text-stroke:0.14px #f5f6f8;letter-spacing:-0.523px;">11</span>
<span class="t" id="t145" style="left:645.50px;top:490.35px;font-size:14px;-webkit-text-stroke:0.14px #f5f6f8;letter-spacing:-0.577px;">11_2</span>
<span class="t" id="t146" style="left:728.00px;top:490.35px;font-size:14px;-webkit-text-stroke:0.14px #f5f6f8;letter-spacing:-0.736px;">ОФ_ЗАКУП</span>
<span class="t" id="t147" style="left:893.50px;top:490.35px;font-size:14px;-webkit-text-stroke:0.14px #f5f6f8;letter-spacing:-0.053px;">Малоцінний ОЗ</span>
<span class="t" id="t148" style="left:1128.40px;top:490.35px;font-size:14px;-webkit-text-stroke:0.14px #f5f6f8;letter-spacing:-0.291px;">Робота</span>
<span class="t" id="t149" style="left:1211.80px;top:491.25px;font-size:14px;-webkit-text-stroke:0.14px #f5f6f8;">-</span>
<span class="t" id="t150" style="left:1319.80px;top:491.25px;font-size:14px;-webkit-text-stroke:0.14px #f5f6f8;">-</span>
<span class="t" id="t151" style="left:1408.50px;top:491.25px;font-size:14px;-webkit-text-stroke:0.14px #f5f6f8;">-</span>
<span class="t" id="t152" style="left:1497.50px;top:491.25px;font-size:14px;-webkit-text-stroke:0.14px #f5f6f8;">-</span>
<span class="t" id="t153" style="left:1585.90px;top:490.35px;font-size:14px;-webkit-text-stroke:0.14px #f5f6f8;">1</span>
<span class="t" id="t154" style="left:1694.80px;top:491.25px;font-size:14px;-webkit-text-stroke:0.14px #f5f6f8;">-</span>
<span class="t" id="t155" style="left:163.30px;top:524.35px;font-size:14px;-webkit-text-stroke:0.14px #f5f6f8;letter-spacing:-0.479px;">О300454_0007</span>
<span class="t" id="t156" style="left:315.00px;top:524.35px;font-size:14px;-webkit-text-stroke:0.14px #f5f6f8;letter-spacing:-0.196px;">Карта пам'яті (7)</span>
<span class="t" id="t157" style="left:454.50px;top:524.35px;font-size:14px;-webkit-text-stroke:0.14px #f5f6f8;letter-spacing:-0.595px;">СПІВРОБ000004</span>
<span class="t" id="t158" style="left:588.50px;top:524.35px;font-size:14px;-webkit-text-stroke:0.14px #f5f6f8;letter-spacing:-0.523px;">11</span>
<span class="t" id="t159" style="left:645.50px;top:524.35px;font-size:14px;-webkit-text-stroke:0.14px #f5f6f8;letter-spacing:-0.577px;">11_2</span>
<span class="t" id="t160" style="left:728.00px;top:524.35px;font-size:14px;-webkit-text-stroke:0.14px #f5f6f8;letter-spacing:-0.736px;">ОФ_ЗАКУП</span>
<span class="t" id="t161" style="left:893.50px;top:524.35px;font-size:14px;-webkit-text-stroke:0.14px #f5f6f8;letter-spacing:-0.053px;">Малоцінний ОЗ</span>
<span class="t" id="t162" style="left:1128.40px;top:524.35px;font-size:14px;-webkit-text-stroke:0.14px #f5f6f8;letter-spacing:-0.297px;">Наявність</span>
<span class="t" id="t163" style="left:1211.80px;top:525.25px;font-size:14px;-webkit-text-stroke:0.14px #f5f6f8;">-</span>
<span class="t" id="t164" style="left:1319.80px;top:525.25px;font-size:14px;-webkit-text-stroke:0.14px #f5f6f8;">-</span>
<span class="t" id="t165" style="left:1407.90px;top:524.35px;font-size:14px;-webkit-text-stroke:0.14px #f5f6f8;">1</span>
<span class="t" id="t166" style="left:1497.50px;top:524.35px;font-size:14px;-webkit-text-stroke:0.14px #f5f6f8;letter-spacing:-0.438px;">953,85</span>
<span class="t" id="t167" style="left:1586.50px;top:525.25px;font-size:14px;-webkit-text-stroke:0.14px #f5f6f8;">-</span>
<span class="t" id="t168" style="left:1694.80px;top:525.25px;font-size:14px;-webkit-text-stroke:0.14px #f5f6f8;">-</span>
<span class="t" id="t169" style="left:163.30px;top:558.35px;font-size:14px;-webkit-text-stroke:0.14px #f5f6f8;letter-spacing:-0.479px;">О300454_0008</span>
<span class="t" id="t170" style="left:315.00px;top:558.35px;font-size:14px;-webkit-text-stroke:0.14px #f5f6f8;letter-spacing:-0.196px;">Карта пам'яті (8)</span>
<span class="t" id="t171" style="left:454.50px;top:558.35px;font-size:14px;-webkit-text-stroke:0.14px #f5f6f8;letter-spacing:-0.595px;">СПІВРОБ000004</span>
<span class="t" id="t172" style="left:588.50px;top:558.35px;font-size:14px;-webkit-text-stroke:0.14px #f5f6f8;letter-spacing:-0.523px;">11</span>
<span class="t" id="t173" style="left:645.50px;top:558.35px;font-size:14px;-webkit-text-stroke:0.14px #f5f6f8;letter-spacing:-0.577px;">11_2</span>
<span class="t" id="t174" style="left:728.00px;top:558.35px;font-size:14px;-webkit-text-stroke:0.14px #f5f6f8;letter-spacing:-0.736px;">ОФ_ЗАКУП</span>
<span class="t" id="t175" style="left:893.50px;top:558.35px;font-size:14px;-webkit-text-stroke:0.14px #f5f6f8;letter-spacing:-0.053px;">Малоцінний ОЗ</span>
<span class="t" id="t176" style="left:1128.40px;top:558.35px;font-size:14px;-webkit-text-stroke:0.14px #f5f6f8;letter-spacing:-0.297px;">Наявність</span>
<span class="t" id="t177" style="left:1211.80px;top:559.25px;font-size:14px;-webkit-text-stroke:0.14px #f5f6f8;">-</span>
<span class="t" id="t178" style="left:1319.80px;top:559.25px;font-size:14px;-webkit-text-stroke:0.14px #f5f6f8;">-</span>
<span class="t" id="t179" style="left:1407.90px;top:558.35px;font-size:14px;-webkit-text-stroke:0.14px #f5f6f8;">1</span>
<span class="t" id="t180" style="left:1497.50px;top:558.35px;font-size:14px;-webkit-text-stroke:0.14px #f5f6f8;letter-spacing:-0.438px;">953,85</span>
<span class="t" id="t181" style="left:1586.50px;top:559.25px;font-size:14px;-webkit-text-stroke:0.14px #f5f6f8;">-</span>
<span class="t" id="t182" style="left:1694.80px;top:559.25px;font-size:14px;-webkit-text-stroke:0.14px #f5f6f8;">-</span>
<span class="t" id="t183" style="left:163.30px;top:592.35px;font-size:14px;-webkit-text-stroke:0.14px #f5f6f8;letter-spacing:-0.479px;">О300454_0009</span>
<span class="t" id="t184" style="left:315.00px;top:592.35px;font-size:14px;-webkit-text-stroke:0.14px #f5f6f8;letter-spacing:-0.196px;">Карта пам'яті (9)</span>
<span class="t" id="t185" style="left:454.50px;top:592.35px;font-size:14px;-webkit-text-stroke:0.14px #f5f6f8;letter-spacing:-0.595px;">СПІВРОБ000128</span>
<span class="t" id="t186" style="left:588.50px;top:592.35px;font-size:14px;-webkit-text-stroke:0.14px #f5f6f8;letter-spacing:-0.523px;">11</span>
<span class="t" id="t187" style="left:645.50px;top:592.35px;font-size:14px;-webkit-text-stroke:0.14px #f5f6f8;letter-spacing:-0.577px;">11_2</span>
<span class="t" id="t188" style="left:728.00px;top:592.35px;font-size:14px;-webkit-text-stroke:0.14px #f5f6f8;letter-spacing:-0.853px;">ОФ_IT</span>
<span class="t" id="t189" style="left:893.50px;top:592.35px;font-size:14px;-webkit-text-stroke:0.14px #f5f6f8;letter-spacing:-0.053px;">Малоцінний ОЗ</span>
<span class="t" id="t190" style="left:1128.40px;top:592.35px;font-size:14px;-webkit-text-stroke:0.14px #f5f6f8;letter-spacing:-0.297px;">Наявність</span>
<span class="t" id="t191" style="left:1211.80px;top:593.25px;font-size:14px;-webkit-text-stroke:0.14px #f5f6f8;">-</span>
<span class="t" id="t192" style="left:1319.80px;top:593.25px;font-size:14px;-webkit-text-stroke:0.14px #f5f6f8;">-</span>
<span class="t" id="t193" style="left:1407.90px;top:592.35px;font-size:14px;-webkit-text-stroke:0.14px #f5f6f8;">1</span>
<span class="t" id="t194" style="left:1497.50px;top:592.35px;font-size:14px;-webkit-text-stroke:0.14px #f5f6f8;letter-spacing:-0.438px;">848,72</span>
<span class="t" id="t195" style="left:1586.50px;top:593.25px;font-size:14px;-webkit-text-stroke:0.14px #f5f6f8;">-</span>
<span class="t" id="t196" style="left:1694.80px;top:593.25px;font-size:14px;-webkit-text-stroke:0.14px #f5f6f8;">-</span>
</div>
</body></html>
